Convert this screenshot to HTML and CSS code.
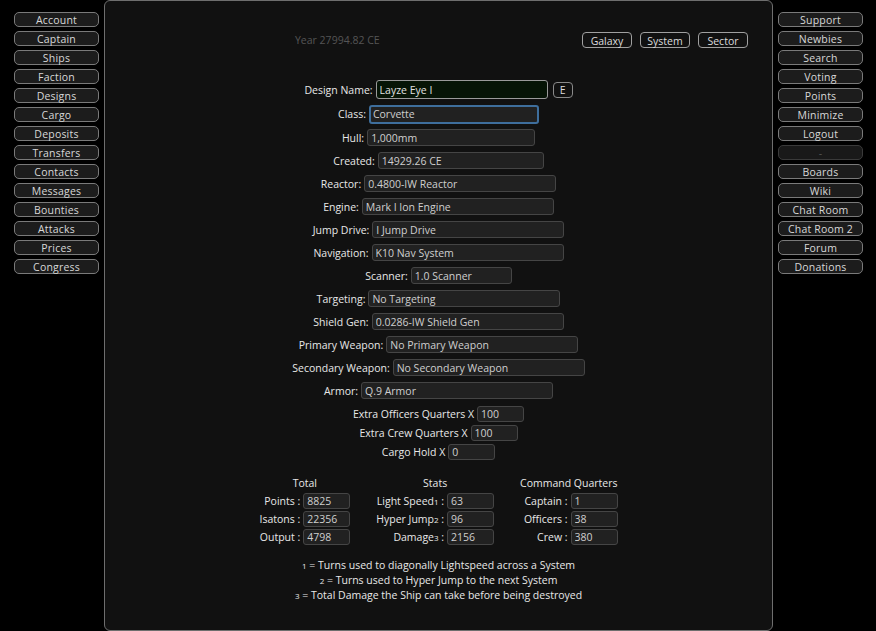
FILE: index.html
```html
<!DOCTYPE html>
<html>
<head>
<meta charset="utf-8">
<link rel="stylesheet" href="styles.css">
</head>
<body>
<nav class="side side-left">
  <a class="nav-btn">Account</a>
  <a class="nav-btn">Captain</a>
  <a class="nav-btn">Ships</a>
  <a class="nav-btn">Faction</a>
  <a class="nav-btn">Designs</a>
  <a class="nav-btn">Cargo</a>
  <a class="nav-btn">Deposits</a>
  <a class="nav-btn">Transfers</a>
  <a class="nav-btn">Contacts</a>
  <a class="nav-btn">Messages</a>
  <a class="nav-btn">Bounties</a>
  <a class="nav-btn">Attacks</a>
  <a class="nav-btn">Prices</a>
  <a class="nav-btn">Congress</a>
</nav>
<main class="panel">
  <div class="header">
    <span class="year">Year 27994.82 CE</span>
    <div class="map-btns">
      <a class="map-btn">Galaxy</a>
      <a class="map-btn">System</a>
      <a class="map-btn">Sector</a>
    </div>
  </div>
  <div class="form">
    <div class="row row-name"><label>Design Name:</label><input class="in in-name" style="width:172px" value="Layze Eye I"><a class="e-btn">E</a></div>
    <div class="row row-class"><label>Class:</label><input class="in in-focus" style="width:170px" value="Corvette"></div>
    <div class="row"><label>Hull:</label><input class="in" style="width:168px" value="1,000mm"></div>
    <div class="row"><label>Created:</label><input class="in" style="width:166px" value="14929.26 CE"></div>
    <div class="row"><label>Reactor:</label><input class="in" value="0.4800-IW Reactor"></div>
    <div class="row"><label>Engine:</label><input class="in" value="Mark I Ion Engine"></div>
    <div class="row"><label>Jump Drive:</label><input class="in" value="I Jump Drive"></div>
    <div class="row"><label>Navigation:</label><input class="in" value="K10 Nav System"></div>
    <div class="row"><label>Scanner:</label><input class="in" style="width:101px" value="1.0 Scanner"></div>
    <div class="row"><label>Targeting:</label><input class="in" value="No Targeting"></div>
    <div class="row"><label>Shield Gen:</label><input class="in" value="0.0286-IW Shield Gen"></div>
    <div class="row"><label>Primary Weapon:</label><input class="in" value="No Primary Weapon"></div>
    <div class="row"><label>Secondary Weapon:</label><input class="in" value="No Secondary Weapon"></div>
    <div class="row"><label>Armor:</label><input class="in" value="Q.9 Armor"></div>
    <div class="row row-x row-x-first"><label>Extra Officers Quarters X</label><input class="in in-small" value="100"></div>
    <div class="row row-x"><label>Extra Crew Quarters X</label><input class="in in-small" value="100"></div>
    <div class="row row-x"><label>Cargo Hold X</label><input class="in in-small" value="0"></div>
  </div>
  <div class="stats">
    <div class="col">
      <div class="col-head">Total</div>
      <label>Points :</label><input class="in in-stat" value="8825">
      <label>Isatons :</label><input class="in in-stat" value="22356">
      <label>Output :</label><input class="in in-stat" value="4798">
    </div>
    <div class="col">
      <div class="col-head">Stats</div>
      <label>Light Speed<span class="fn">1</span> :</label><input class="in in-stat" value="63">
      <label>Hyper Jump<span class="fn">2</span> :</label><input class="in in-stat" value="96">
      <label>Damage<span class="fn">3</span> :</label><input class="in in-stat" value="2156">
    </div>
    <div class="col">
      <div class="col-head">Command Quarters</div>
      <label>Captain :</label><input class="in in-stat" value="1">
      <label>Officers :</label><input class="in in-stat" value="38">
      <label>Crew :</label><input class="in in-stat" value="380">
    </div>
  </div>
  <div class="notes">
    <p><span class="fn">1</span> = Turns used to diagonally Lightspeed across a System</p>
    <p><span class="fn">2</span> = Turns used to Hyper Jump to the next System</p>
    <p><span class="fn">3</span> = Total Damage the Ship can take before being destroyed</p>
  </div>
</main>
<nav class="side side-right">
  <a class="nav-btn">Support</a>
  <a class="nav-btn">Newbies</a>
  <a class="nav-btn">Search</a>
  <a class="nav-btn">Voting</a>
  <a class="nav-btn">Points</a>
  <a class="nav-btn">Minimize</a>
  <a class="nav-btn">Logout</a>
  <a class="nav-btn nav-dim">-</a>
  <a class="nav-btn">Boards</a>
  <a class="nav-btn">Wiki</a>
  <a class="nav-btn">Chat Room</a>
  <a class="nav-btn">Chat Room 2</a>
  <a class="nav-btn">Forum</a>
  <a class="nav-btn">Donations</a>
</nav>
</body>
</html>
```
FILE: styles.css
```css
* { box-sizing: border-box; }
html, body { height: 100%; }
body {
  margin: 0;
  background: #000;
  font-family: "Open Sans", "Noto Sans", sans-serif;
  font-size: 10.5px;
  color: #e6e6e6;
  display: flex;
  align-items: flex-start;
  overflow: hidden;
}
.side {
  width: 85px;
  padding-top: 12px;
  display: flex;
  flex-direction: column;
  gap: 4px;
  flex-shrink: 0;
}
.side-left { margin-left: 14px; }
.side-right { margin-left: 5px; }
.nav-btn {
  display: block;
  height: 15px;
  line-height: 15px;
  text-align: center;
  color: #d8d8d8;
  background: #1c1c1c;
  border: 1px solid #7a7a7a;
  border-radius: 5px;
  letter-spacing: 0.2px;
}
.nav-dim {
  border-color: #3a3a3a;
  background: #191919;
  color: #555;
}
.panel {
  margin-left: 5px;
  width: 669px;
  height: 631px;
  flex-shrink: 0;
  background: #111;
  border: 1px solid #6e6e6e;
  border-radius: 6px;
}
.header {
  display: flex;
  align-items: center;
  justify-content: space-between;
  margin-top: 31px;
  padding-left: 190px;
  padding-right: 24px;
  height: 16px;
}
.year { color: #555; }
.map-btns { display: flex; gap: 8px; }
.map-btn {
  width: 50px;
  height: 16px;
  line-height: 16px;
  text-align: center;
  border: 1px solid #a0a0a0;
  border-radius: 4px;
  color: #dcdcdc;
}
.form { margin-top: 29px; display: flex; flex-direction: column; }
.row {
  height: 23px;
  display: flex;
  align-items: center;
  justify-content: center;
  gap: 3px;
}
.row-name { height: 25px; }
.row-class { height: 24px; }
.row-x { height: 19px; }
.row-x-first { margin-top: 2px; }
label { color: #e8e8e8; white-space: nowrap; }
.in {
  font: inherit;
  color: #cfcfcf;
  background: #212121;
  border: 1px solid #454545;
  border-radius: 3px;
  height: 17px;
  width: 192px;
  padding: 0 3px;
  outline: none;
}
.in-name {
  height: 19px;
  background: #061406;
  border-color: #9a9a9a;
  color: #e0e0e0;
}
.in-focus {
  height: 19px;
  border: 2px solid #3e6e9c;
  padding: 0 2px;
}
.in-small { width: 47px; height: 16px; }
.in-stat { width: 47px; height: 16px; }
.e-btn {
  width: 20px;
  height: 16px;
  line-height: 15px;
  margin-left: 2px;
  text-align: center;
  border: 1px solid #8a8a8a;
  border-radius: 4px;
  color: #ddd;
}
.stats {
  margin-top: 13px;
  display: flex;
  justify-content: center;
  gap: 26px;
}
.col {
  display: grid;
  grid-template-columns: auto 47px;
  grid-auto-rows: 18px;
  column-gap: 3px;
  align-items: center;
}
.col label { text-align: right; }
.col-head {
  grid-column: 1 / 3;
  text-align: center;
  color: #e8e8e8;
}
.fn { font-size: 8px; }
.notes {
  margin-top: 12px;
  text-align: center;
}
.notes p { margin: 0; line-height: 14px; color: #e8e8e8; }
```
